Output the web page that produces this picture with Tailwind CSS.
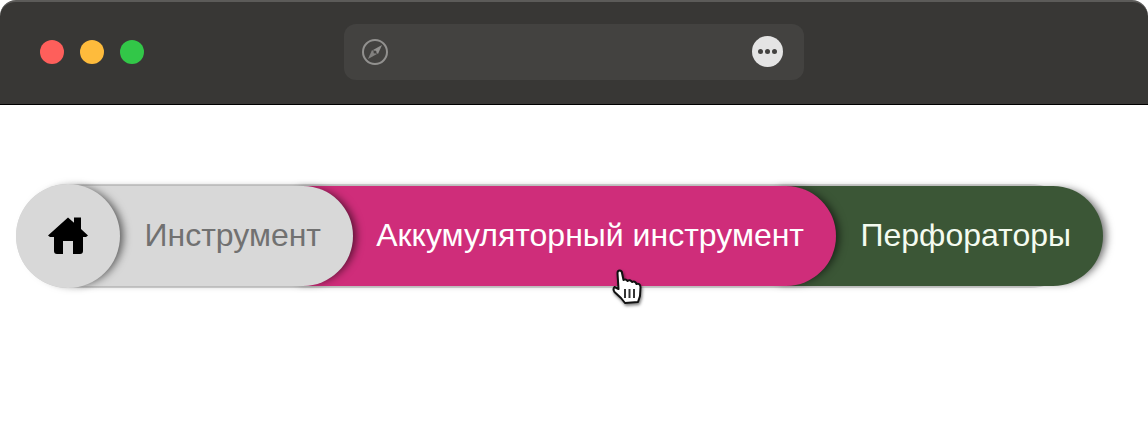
<!DOCTYPE html>
<html lang="ru">
  <head>
    <meta charset="UTF-8" />
    <title>Breadcrumb</title>
    <meta name="viewport" content="width=device-width, initial-scale=1.0" />
    <script src="https://cdn.jsdelivr.net/npm/@tailwindcss/browser@4"></script>
  </head>
  <body class="relative h-[448px] w-[1148px] overflow-hidden bg-white font-['Liberation_Sans',Arial,sans-serif]">
    <!-- Window bar -->
    <header class="flex h-[105px] items-center rounded-t-[16px] border-t-2 border-b border-t-[#5c5b59] border-b-black bg-[#383735] pb-[2px] pl-10">
      <div class="flex gap-4">
        <span class="h-6 w-6 rounded-full bg-[#fe5f5b]"></span>
        <span class="h-6 w-6 rounded-full bg-[#febb3c]"></span>
        <span class="h-6 w-6 rounded-full bg-[#32c748]"></span>
      </div>
      <div class="ml-[200px] flex h-14 w-[460px] items-center justify-between rounded-xl bg-[#434240] pr-[21px] pb-[1px] pl-[17px]">
        <svg class="h-7 w-7" viewBox="0 0 28 28">
          <circle cx="14" cy="14" r="12" fill="none" stroke="#92918f" stroke-width="2" />
          <path d="M21 7 L17 16 L12 12 Z" fill="#92918f" />
          <path d="M7 21 L11 12 L16 16 Z" fill="#82817f" />
          <circle cx="14" cy="14" r="1.5" fill="#434240" />
        </svg>
        <div class="flex h-[31px] w-[31px] items-center justify-center gap-[2px] rounded-full bg-[#e4e4e4]">
          <span class="h-[5px] w-[5px] rounded-full bg-[#434240]"></span>
          <span class="h-[5px] w-[5px] rounded-full bg-[#434240]"></span>
          <span class="h-[5px] w-[5px] rounded-full bg-[#434240]"></span>
        </div>
      </div>
    </header>

    <!-- Breadcrumb -->
    <nav class="mt-[79px] ml-4">
      <ol class="flex h-[104px] w-[1066px] items-center rounded-full bg-[#d8d8d8]">
        <li class="relative z-40 flex h-[104px] w-[104px] shrink-0 items-center justify-center rounded-full bg-[#d8d8d8] shadow-[6px_0_8px_-3px_rgba(0,0,0,0.6)]">
          <svg class="h-[38px] w-[40px]" viewBox="0 0 40 38">
            <path d="M0 18.5 L20 0.5 L26 5.8 L26 0.5 L33 0.5 L33 12 L40 18.5 L38 20 L35 20 L35 34 Q35 37 32 37 L25 37 L25 24 L15 24 L15 37 L9 37 Q6 37 6 34 L6 20 L2 20 Z" fill="#000" />
          </svg>
        </li>
        <li class="relative z-30 -ml-[50px] flex h-[100px] w-[283px] shrink-0 items-center justify-end rounded-r-full bg-[#d8d8d8] pr-[32px] pb-[2px] text-[#717171] shadow-[6px_0_8px_-3px_rgba(0,0,0,0.6)]">
          <a class="text-[32px] leading-none whitespace-nowrap">Инструмент</a>
        </li>
        <li class="relative z-20 -ml-[63px] flex h-[100px] w-[546px] shrink-0 items-center justify-end rounded-r-full bg-[#cf2d7a] pr-[32px] pb-[2px] text-white shadow-[6px_0_8px_-3px_rgba(0,0,0,0.6)]">
          <a class="text-[32px] leading-none whitespace-nowrap">Аккумуляторный инструмент</a>
        </li>
        <li class="relative z-10 -ml-[66px] flex h-[100px] w-[333px] shrink-0 items-center justify-end rounded-r-full bg-[#3b5636] pr-[32px] pb-[2px] text-[#f4fbf0] shadow-[6px_0_8px_-3px_rgba(0,0,0,0.6)]">
          <a class="text-[32px] leading-none whitespace-nowrap">Перфораторы</a>
        </li>
      </ol>
    </nav>

    <!-- Cursor sits over the content -->
    <svg class="absolute top-[269px] left-[611px] z-50 h-[38px] w-[32px] drop-shadow-[1px_2px_1.500px_rgba(0,0,0,0.5)]" viewBox="0 0 32 38">
      <path d="M6.500 4 Q6.500 1.500 8.500 1.500 Q11 1.500 11 4 L12.500 11 Q15 9.500 16.500 12 Q19 10 21 13 Q24 11.500 25.500 15 Q29 14 29.500 18 L29 27 L27 33 L14 34 L10 29 L3.500 23 Q1.500 20 3.500 18 L7.500 20 Z" fill="#fff" stroke="#111" stroke-width="2" stroke-linejoin="round" />
      <path d="M14 20 V29 M18.500 20 V29 M23 20 V29" stroke="#333" stroke-width="2" fill="none" />
    </svg>
  </body>
</html>
